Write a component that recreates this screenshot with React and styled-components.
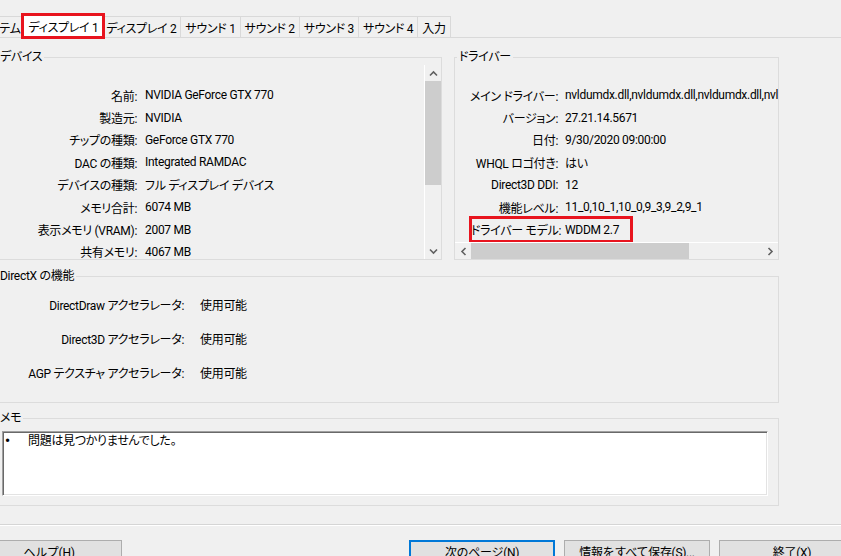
import React from 'react';
import styled, { createGlobalStyle } from 'styled-components';

const GlobalStyle = createGlobalStyle`
  html, body {
    margin: 0;
    padding: 0;
    background: #f0f0f0;
  }
  body {
    font-family: Roboto, "Noto Sans CJK JP", sans-serif;
    font-size: 12px;
    letter-spacing: -0.3px;
    color: #000;
    font-feature-settings: "palt" 1;
  }
`;

const Window = styled.div`
  width: 841px;
  height: 556px;
  overflow: hidden;
  background: #f0f0f0;
`;

const TabStrip = styled.div`
  display: flex;
  align-items: flex-end;
  height: 21px;
  margin-top: 16px;
  margin-left: -26px;
  border-bottom: 1px solid #d9d9d9;
`;

const Tab = styled.div`
  box-sizing: border-box;
  height: ${(p) => (p.$active ? 24 : 21)}px;
  margin: ${(p) => (p.$active ? '0 -2px -1px -3px' : '0 0 0 -1px')};
  padding: 0 ${(p) => (p.$active ? 5 : 4)}px;
  display: flex;
  align-items: center;
  border: 1px solid #d9d9d9;
  border-bottom: none;
  background: ${(p) => (p.$active ? '#fff' : '#f0f0f0')};
  white-space: nowrap;
  position: relative;
  z-index: ${(p) => (p.$active ? 1 : 0)};
  outline: ${(p) => (p.$active ? '3px solid #e8141e' : 'none')};
  outline-offset: -2px;
`;

const Content = styled.div`
  width: 784px;
  margin-left: -5px;
`;

const TopRow = styled.div`
  display: flex;
  gap: 12px;
  margin-top: 11px;
`;

const GroupBox = styled.fieldset`
  box-sizing: border-box;
  margin: ${(p) => p.$mt || 0}px 0 0 0;
  padding: 0;
  min-width: 0;
  width: ${(p) => (p.$width ? `${p.$width}px` : 'auto')};
  height: ${(p) => p.$height}px;
  border: 1px solid #dcdcdc;
`;

const Legend = styled.legend`
  margin-left: 2px;
  padding: 0 2px;
  line-height: 16px;
  font-size: 12px;
`;

const ListBox = styled.div`
  display: flex;
  height: ${(p) => p.$height}px;
`;

const ListColumn = styled.div`
  display: flex;
  flex-direction: column;
  flex: 1;
  min-width: 0;
`;

const List = styled.div`
  flex: 1;
  overflow: hidden;
  padding-top: ${(p) => p.$pt || 19}px;
`;

const Row = styled.div`
  display: flex;
  align-items: center;
  height: ${(p) => p.$h || 22.4}px;
  white-space: nowrap;
`;

const HighlightRow = styled(Row)`
  width: fit-content;
  margin-left: ${(p) => p.$offset}px;
  padding-right: 12px;
  outline: 3px solid #e8141e;
  outline-offset: -1px;
`;

const Label = styled.span`
  flex-shrink: 0;
  width: ${(p) => p.$w}px;
  text-align: right;
`;

const Value = styled.span`
  margin-left: ${(p) => p.$gap}px;
`;

const VScroll = styled.div`
  display: flex;
  flex-direction: column;
  width: 16px;
  border-left: 1px solid #fff;
  background: #f0f0f0;
`;

const HScroll = styled.div`
  display: flex;
  height: 16px;
  border-top: 1px solid #fff;
  background: #f0f0f0;
`;

const ArrowButton = styled.div`
  flex: 0 0 16px;
  height: 16px;
  width: 16px;
  display: flex;
  align-items: center;
  justify-content: center;
`;

const VThumb = styled.div`
  height: 104px;
  background: #cdcdcd;
`;

const HThumb = styled.div`
  width: 218px;
  background: #cdcdcd;
`;

const Spacer = styled.div`
  flex: 1;
`;

const ChevronSvg = styled.svg`
  transform: rotate(${(p) => p.$rot}deg);
`;

const Chevron = ({ dir }) => {
  const rot = { up: 0, down: 180, left: -90, right: 90 }[dir];
  return (
    <ChevronSvg $rot={rot} width="9" height="9" viewBox="0 0 9 9">
      <path d="M1 6.5 L4.5 3 L8 6.5" fill="none" stroke="#606060" strokeWidth="1.6" />
    </ChevronSvg>
  );
};

const MemoBox = styled.div`
  box-sizing: border-box;
  height: 65px;
  margin: 5px 10px 0 6px;
  padding: 1px 1px 0;
  background: #fff;
  border: 1px solid;
  border-color: #a0a0a0 #fff #fff #a0a0a0;
  box-shadow: inset 1px 1px 0 #696969, inset -1px -1px 0 #e3e3e3;
  display: flex;
  line-height: 16px;
`;

const Bullet = styled.span`
  width: 23px;
  padding-left: 1px;
  font-size: 14px;
  font-weight: 700;
`;

const Separator = styled.div`
  margin-top: 18px;
  border-top: 1px solid #d5d5d5;
  border-bottom: 1px solid #fff;
`;

const Footer = styled.div`
  display: flex;
  justify-content: space-between;
  margin: 14px -24px 0 -24px;
`;

const ButtonGroup = styled.div`
  display: flex;
  gap: 9px;
`;

const Button = styled.button`
  box-sizing: border-box;
  width: 146px;
  height: 23px;
  padding: 0;
  font-family: inherit;
  font-size: 12px;
  letter-spacing: inherit;
  color: #000;
  background: #e1e1e1;
  border: 1px solid ${(p) => (p.$primary ? '#0078d7' : '#adadad')};
  box-shadow: ${(p) => (p.$primary ? 'inset 0 0 0 1px #0078d7' : 'none')};
`;

const tabs = [
  'システム',
  'ディスプレイ 1',
  'ディスプレイ 2',
  'サウンド 1',
  'サウンド 2',
  'サウンド 3',
  'サウンド 4',
  '入力',
];

const deviceRows = [
  ['名前:', 'NVIDIA GeForce GTX 770'],
  ['製造元:', 'NVIDIA'],
  ['チップの種類:', 'GeForce GTX 770'],
  ['DAC の種類:', 'Integrated RAMDAC'],
  ['デバイスの種類:', 'フル ディスプレイ デバイス'],
  ['メモリ合計:', '6074 MB'],
  ['表示メモリ (VRAM):', '2007 MB'],
  ['共有メモリ:', '4067 MB'],
];

const driverRows = [
  ['メイン ドライバー:', 'nvldumdx.dll,nvldumdx.dll,nvldumdx.dll,nvldumdx.dll'],
  ['バージョン:', '27.21.14.5671'],
  ['日付:', '9/30/2020 09:00:00'],
  ['WHQL ロゴ付き:', 'はい'],
  ['Direct3D DDI:', '12'],
  ['機能レベル:', '11_0,10_1,10_0,9_3,9_2,9_1'],
];

const directxRows = [
  ['DirectDraw アクセラレータ:', '使用可能'],
  ['Direct3D アクセラレータ:', '使用可能'],
  ['AGP テクスチャ アクセラレータ:', '使用可能'],
];

export default function App() {
  return (
    <Window>
      <GlobalStyle />
      <TabStrip>
        {tabs.map((t, i) => (
          <Tab key={t} $active={i === 1}>
            {t}
          </Tab>
        ))}
      </TabStrip>
      <Content>
        <TopRow>
          <GroupBox $width={447} $height={211}>
            <Legend>デバイス</Legend>
            <ListBox $height={194}>
              <List>
                {deviceRows.map(([l, v]) => (
                  <Row key={l}>
                    <Label $w={141}>{l}</Label>
                    <Value $gap={8}>{v}</Value>
                  </Row>
                ))}
              </List>
              <VScroll>
                <ArrowButton>
                  <Chevron dir="up" />
                </ArrowButton>
                <VThumb />
                <Spacer />
                <ArrowButton>
                  <Chevron dir="down" />
                </ArrowButton>
              </VScroll>
            </ListBox>
          </GroupBox>
          <GroupBox $width={325} $height={211}>
            <Legend>ドライバー</Legend>
            <ListBox $height={194}>
              <ListColumn>
                <List>
                  {driverRows.map(([l, v]) => (
                    <Row key={l}>
                      <Label $w={103}>{l}</Label>
                      <Value $gap={7}>{v}</Value>
                    </Row>
                  ))}
                  <HighlightRow $offset={16}>
                    <Label $w={87}>ドライバー モデル:</Label>
                    <Value $gap={7}>WDDM 2.7</Value>
                  </HighlightRow>
                </List>
                <HScroll>
                  <ArrowButton>
                    <Chevron dir="left" />
                  </ArrowButton>
                  <HThumb />
                  <Spacer />
                  <ArrowButton>
                    <Chevron dir="right" />
                  </ArrowButton>
                </HScroll>
              </ListColumn>
            </ListBox>
          </GroupBox>
        </TopRow>
        <GroupBox $mt={8} $height={135}>
          <Legend>DirectX の機能</Legend>
          <List $pt={3}>
            {directxRows.map(([l, v]) => (
              <Row key={l} $h={34}>
                <Label $w={188}>{l}</Label>
                <Value $gap={16}>{v}</Value>
              </Row>
            ))}
          </List>
        </GroupBox>
        <GroupBox $mt={7} $height={96}>
          <Legend>メモ</Legend>
          <MemoBox>
            <Bullet>•</Bullet>
            <span>問題は見つかりませんでした。</span>
          </MemoBox>
        </GroupBox>
      </Content>
      <Separator />
      <Footer>
        <Button>ヘルプ(H)</Button>
        <ButtonGroup>
          <Button $primary>次のページ(N)</Button>
          <Button>情報をすべて保存(S)...</Button>
          <Button>終了(X)</Button>
        </ButtonGroup>
      </Footer>
    </Window>
  );
}
